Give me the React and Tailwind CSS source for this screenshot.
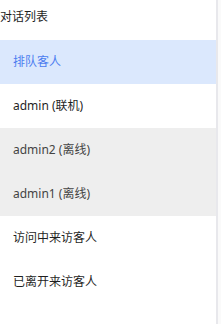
import React from 'react';

const rows = [
  { label: '排队客人', variant: 'active' },
  { label: 'admin (联机)', variant: 'normal' },
  { label: 'admin2 (离线)', variant: 'offline' },
  { label: 'admin1 (离线)', variant: 'offline' },
  { label: '访问中来访客人', variant: 'normal' },
  { label: '已离开来访客人', variant: 'normal' },
];

const variantClasses = {
  active: 'bg-[#dbe8fd] text-[#4c7df0]',
  normal: 'bg-white text-[#1f1f1f]',
  offline: 'bg-[#eeeeee] text-[#444444]',
};

export default function App() {
  return (
    <div
      className="flex h-[324px] w-[221px] bg-white"
      style={{ fontFamily: '"Noto Sans", "Noto Sans CJK SC", sans-serif' }}
    >
      <div className="flex w-[216px] flex-col">
        {/* Header */}
        <div className="flex h-[40px] items-center pb-[6px] text-[12px] text-[#1f1f1f]">
          对话列表
        </div>

        {/* List */}
        {rows.map((row) => (
          <div
            key={row.label}
            className={`flex h-[44px] items-center pl-[13px] text-[12px] ${variantClasses[row.variant]}`}
          >
            {row.label}
          </div>
        ))}
      </div>

      {/* Scrollbar edge */}
      <div className="w-[2px] bg-[#e8e8ec]" />
      <div className="flex-1 bg-[#fafafa]" />
    </div>
  );
}
